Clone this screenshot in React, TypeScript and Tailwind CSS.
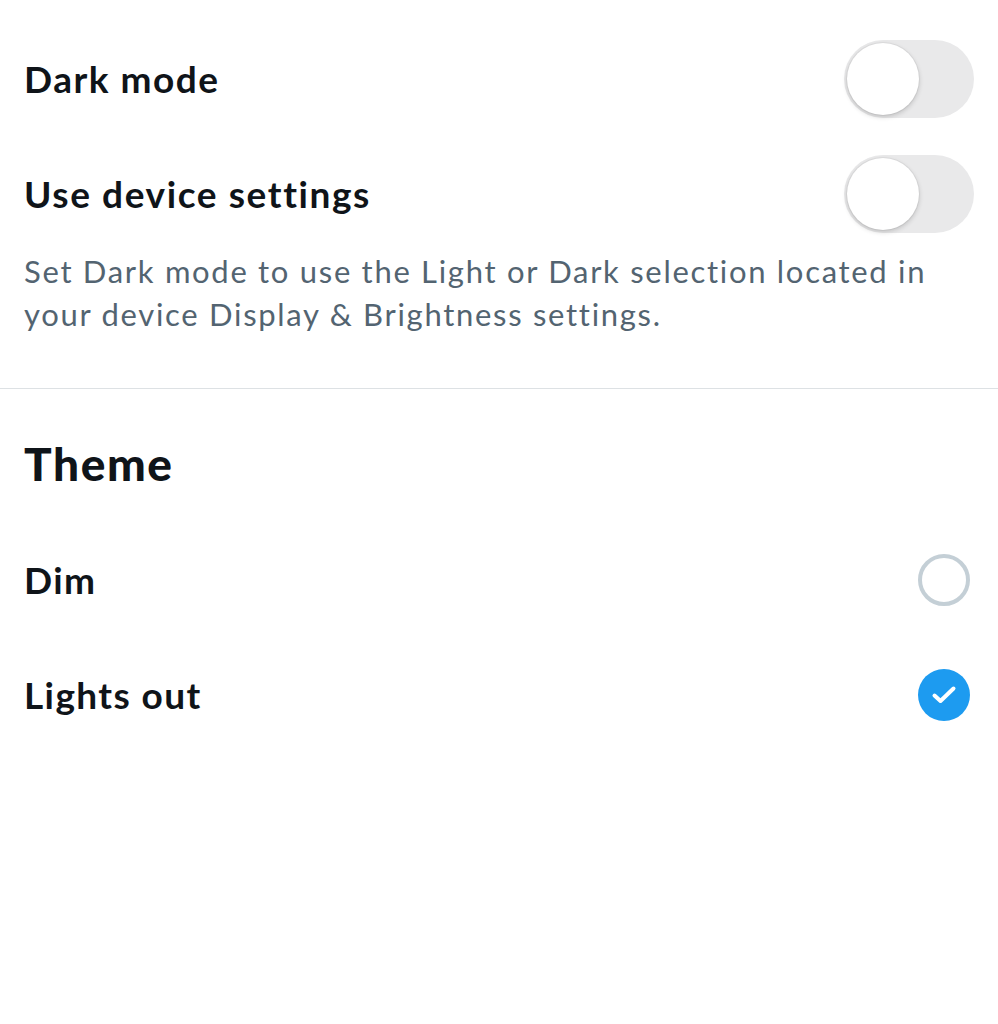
import { useState } from "react";

const font = { fontFamily: "Lato, 'Open Sans', sans-serif" };

function Toggle({ on }: { on: boolean }) {
  return (
    <div
      className={`flex h-[78px] w-[130px] items-center rounded-full p-[3px] ${
        on ? "justify-end bg-[#1d9bf0]" : "justify-start bg-[#e9e9ea]"
      }`}
    >
      <div className="h-[72px] w-[72px] rounded-full bg-white shadow-[0_2px_5px_rgba(0,0,0,0.18),0_0_0_1px_rgba(0,0,0,0.04)]" />
    </div>
  );
}

function Radio({ checked }: { checked: boolean }) {
  if (checked) {
    return (
      <div className="flex h-[52px] w-[52px] items-center justify-center rounded-full bg-[#1d9bf0]">
        <svg width="28" height="28" viewBox="0 0 28 28" fill="none">
          <path d="M4.5 14.5l6 5.5L23.5 7.5" stroke="white" strokeWidth="4" strokeLinecap="round" strokeLinejoin="round" />
        </svg>
      </div>
    );
  }
  return <div className="h-[52px] w-[52px] rounded-full border-[4px] border-[#c4cfd6]" />;
}

export default function App() {
  const [theme] = useState<"dim" | "lights">("lights");

  return (
    <div className="min-h-[1024px] w-full bg-white text-[#0f1419]" style={font}>
      <div className="px-6 pt-[40px]">
        {/* Dark mode */}
        <div className="flex h-[78px] items-center justify-between">
          <span className="text-[37px] font-bold tracking-[1.5px]">Dark mode</span>
          <Toggle on={false} />
        </div>

        <div className="mt-[37px] flex h-[78px] items-center justify-between">
          <span className="text-[37px] font-bold tracking-[1.6px]">Use device settings</span>
          <Toggle on={false} />
        </div>

        <p className="mt-[17px] max-w-[920px] text-[31px] leading-[43px] tracking-[1.7px] text-[#536471]">
          Set Dark mode to use the Light or Dark selection located in your device Display &amp; Brightness settings.
        </p>
      </div>

      <div className="mt-[52px] h-px bg-[#dde1e4]" />

      <div className="px-6">
        <h2 className="mt-[44px] flex h-[60px] items-center text-[46px] font-black tracking-[1.6px]">Theme</h2>

        <div className="mt-[48px] flex h-[78px] items-center justify-between pr-[4px]">
          <span className="text-[37px] font-bold tracking-[1.4px]">Dim</span>
          <Radio checked={theme === "dim"} />
        </div>

        <div className="mt-[37px] flex h-[78px] items-center justify-between pr-[4px]">
          <span className="text-[37px] font-bold tracking-[1.4px]">Lights out</span>
          <Radio checked={theme === "lights"} />
        </div>
      </div>
    </div>
  );
}
